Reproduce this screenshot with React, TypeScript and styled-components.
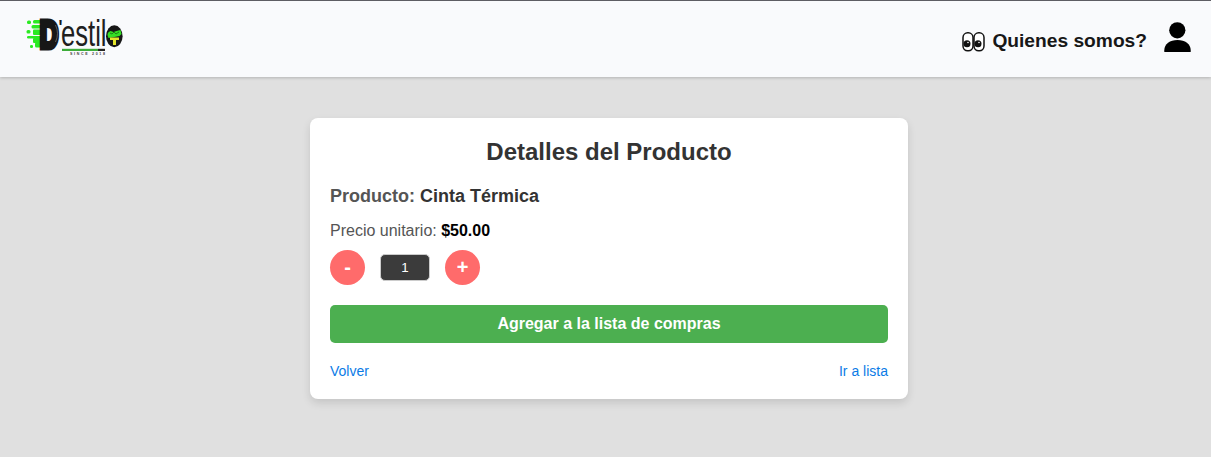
import React, { useState } from "react";
import styled, { createGlobalStyle } from "styled-components";

const GlobalStyle = createGlobalStyle`
  * { box-sizing: border-box; }
  body {
    margin: 0;
    background: #e0e0e0;
    font-family: "Liberation Sans", Arial, sans-serif;
  }
`;

const Page = styled.div`
  display: flex;
  flex-direction: column;
  min-height: 100vh;
`;

const Header = styled.header`
  display: flex;
  align-items: flex-start;
  justify-content: space-between;
  height: 77px;
  padding: 5px 19px 0 20px;
  border-top: 1px solid #5d5d63;
  background: #f9fafc;
  box-shadow: 0 1px 3px rgba(0, 0, 0, 0.2);
`;

const LogoArt = styled.svg`
  display: block;
  width: 110px;
  height: 60px;
  overflow: visible;
`;

const Nav = styled.nav`
  display: flex;
  align-items: center;
  height: 46px;
  margin-top: 8px;
`;

const AboutLink = styled.a`
  display: flex;
  align-items: center;
  gap: 7px;
  margin-top: 7px;
  color: #171717;
  font-size: 19.2px;
  font-weight: 700;
  line-height: 24px;
  text-decoration: none;
  white-space: nowrap;
`;

const EyesArt = styled.svg`
  display: block;
  width: 23px;
  height: 20px;
  margin-top: 2px;
`;

const UserArt = styled.svg`
  display: block;
  width: 27px;
  height: 31px;
  margin: 0 1px 0 17px;
`;

const Main = styled.main`
  display: flex;
  justify-content: center;
  padding: 41px 0 0 7px;
`;

const Card = styled.section`
  width: 598px;
  height: 281px;
  padding: 20px 20px 0;
  border-radius: 8px;
  background: #fff;
  box-shadow: 0 4px 8px rgba(0, 0, 0, 0.12);
`;

const Title = styled.h2`
  margin: 0 0 20px;
  color: #333;
  font-size: 24px;
  line-height: 28px;
  text-align: center;
`;

const ProductName = styled.h3`
  margin: 0 0 14px;
  color: #333;
  font-size: 18px;
  line-height: 20px;
`;

const Label = styled.span`
  color: #555;
`;

const Price = styled.p`
  margin: 0 0 9px;
  padding-top: 1px;
  color: #555;
  font-size: 16px;
  line-height: 20px;

  strong { color: #000; }
`;

const Quantity = styled.div`
  display: flex;
  align-items: center;
  gap: 15px;
  height: 35px;
`;

const StepButton = styled.button`
  width: 35px;
  height: 35px;
  padding: 0;
  border: 0;
  border-radius: 50%;
  background: #ff6b6b;
  color: #fff;
  font: 700 20px/35px "Liberation Sans", Arial, sans-serif;
`;

const Amount = styled.input`
  width: 50px;
  height: 27px;
  padding: 0;
  border: 1px solid #ccc;
  border-radius: 5px;
  background: #3b3b3b;
  color: #fff;
  font: 13.333px "Liberation Sans", Arial, sans-serif;
  text-align: center;
`;

const AddButton = styled.button`
  display: block;
  width: 100%;
  height: 38px;
  margin: 20px 0;
  padding: 0;
  border: 0;
  border-radius: 5px;
  background: #4caf50;
  color: #fff;
  font: 700 16px/38px "Liberation Sans", Arial, sans-serif;
`;

const Links = styled.div`
  display: flex;
  justify-content: space-between;
`;

const TextLink = styled.a`
  color: #0b7be6;
  font-size: 14px;
  line-height: 16px;
  text-decoration: none;
`;

const sans = '"Liberation Sans", Arial, sans-serif';

function Logo() {
  return (
    <LogoArt viewBox="20 6 110 60" role="img" aria-label="D'estilo">
      <g fill="#2bea22">
        <rect x="27" y="20.5" width="4" height="3.5" rx="1.5" />
        <rect x="33" y="20" width="9" height="3.5" rx="1.5" />
        <rect x="31.5" y="25" width="11" height="3.5" rx="1.5" />
        <rect x="26.5" y="30" width="4" height="3.5" rx="1.5" />
        <rect x="33" y="29.5" width="9" height="5.5" rx="1" />
        <rect x="27" y="36" width="15" height="2.5" rx="1.2" />
        <rect x="33" y="38" width="9" height="5" rx="1" />
        <rect x="30" y="45" width="3" height="3" rx="1.3" />
        <rect x="35" y="42" width="7" height="5.5" rx="1.5" />
      </g>
      <text
        transform="translate(39.8 47.5) scale(.67 1)"
        fontFamily={sans}
        fontSize="38.5"
        fontWeight="700"
        fill="#171717"
        stroke="#171717"
        strokeWidth="5.2"
      >
        D
      </text>
      <path d="M55.5 25q4 8.5 0 17" fill="none" stroke="#777" strokeWidth=".7" />
      <text transform="translate(58.5 34) scale(.8 1)" fontFamily={sans} fontSize="21" fontWeight="700" fill="#171717">'</text>
      <text
        x="61"
        y="46"
        fontFamily={sans}
        fontSize="36"
        fill="#202020"
        textLength="45.5"
        lengthAdjust="spacingAndGlyphs"
      >
        estil
      </text>
      <rect x="62" y="48.8" width="36" height="2.2" fill="#3cac39" />
      <rect x="98" y="48.8" width="7" height="2.2" fill="#252525" />
      <text x="70" y="54.8" fontFamily={sans} fontSize="3.6" fontWeight="700" fill="#444" textLength="35">SINCE 2018</text>
      <ellipse cx="114.3" cy="36.3" rx="8.3" ry="11" fill="#171717" />
      <path d="M107.5 35q0-3 3-4l3 1 3-1 4-1 1 4-2 2-5 1-6 1z" fill="#35df25" />
      <path d="M110 33l2 1 2-2 2 2 3-2" fill="none" stroke="#176c13" strokeWidth=".8" />
      <path d="M110 37.5h9v2.4h-3v5h-3v-5h-3z" fill="#e3e52a" />
    </LogoArt>
  );
}

function Eyes() {
  return (
    <EyesArt viewBox="0 0 23 20" aria-hidden="true">
      <g fill="#fff" stroke="#111" strokeWidth="1.5">
        <rect x="1" y=".8" width="10" height="18" rx="4.7" />
        <rect x="12" y=".8" width="10" height="18" rx="4.7" />
      </g>
      <circle cx="5" cy="11.8" r="3.5" fill="#111" />
      <circle cx="16" cy="11.8" r="3.5" fill="#111" />
      <circle cx="6" cy="10.5" r=".8" fill="#fff" />
      <circle cx="17" cy="10.5" r=".8" fill="#fff" />
    </EyesArt>
  );
}

function User() {
  return (
    <UserArt viewBox="0 0 27 31" aria-label="Perfil">
      <circle cx="13.3" cy="8.3" r="8.1" />
      <path d="M.3 30v-1.700C.3 22 6 18 13.500 18S26.700 22 26.700 28.300V30z" />
    </UserArt>
  );
}

export default function App() {
  const [amount, setAmount] = useState(1);

  return (
    <Page>
      <GlobalStyle />
      <Header>
        <Logo />
        <Nav>
          <AboutLink>
            <Eyes />
            <span>Quienes somos?</span>
          </AboutLink>
          <User />
        </Nav>
      </Header>
      <Main>
        <Card>
          <Title>Detalles del Producto</Title>
          <ProductName>
            <Label>Producto:</Label> Cinta Térmica
          </ProductName>
          <Price>
            Precio unitario: <strong>$50.00</strong>
          </Price>
          <Quantity>
            <StepButton onClick={() => setAmount(Math.max(1, amount - 1))}>-</StepButton>
            <Amount value={amount} readOnly />
            <StepButton onClick={() => setAmount(amount + 1)}>+</StepButton>
          </Quantity>
          <AddButton>Agregar a la lista de compras</AddButton>
          <Links>
            <TextLink>Volver</TextLink>
            <TextLink>Ir a lista</TextLink>
          </Links>
        </Card>
      </Main>
    </Page>
  );
}
